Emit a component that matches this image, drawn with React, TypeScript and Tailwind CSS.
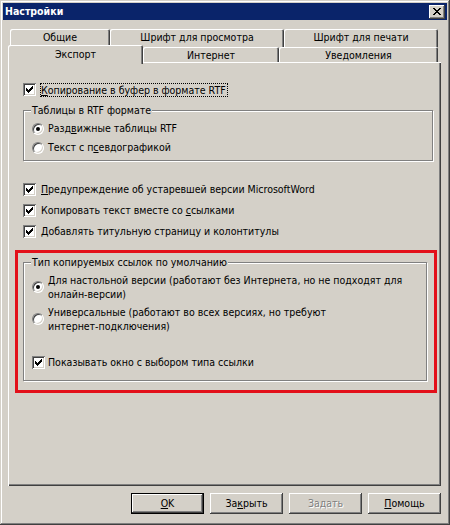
import React from "react";

const raised =
  "shadow-[inset_-1px_-1px_0_#404040,inset_1px_1px_0_#ffffff,inset_-2px_-2px_0_#808080,inset_2px_2px_0_#d4d0c8]";

const CheckMark = () => (
  <svg width="7" height="7" viewBox="0 0 7 7" shapeRendering="crispEdges">
    <rect x="0" y="2" width="1" height="3" fill="#000" />
    <rect x="1" y="3" width="1" height="3" fill="#000" />
    <rect x="2" y="4" width="1" height="3" fill="#000" />
    <rect x="3" y="3" width="1" height="3" fill="#000" />
    <rect x="4" y="2" width="1" height="3" fill="#000" />
    <rect x="5" y="1" width="1" height="3" fill="#000" />
    <rect x="6" y="0" width="1" height="3" fill="#000" />
  </svg>
);

const CheckBox = ({ checked }: { checked: boolean }) => (
  <div className="w-[13px] h-[13px] shrink-0 bg-white flex items-center justify-center shadow-[inset_1px_1px_0_#808080,inset_-1px_-1px_0_#ffffff,inset_2px_2px_0_#404040,inset_-2px_-2px_0_#d4d0c8]">
    {checked && <CheckMark />}
  </div>
);

const Radio = ({ checked }: { checked: boolean }) => (
  <div className="w-[12px] h-[12px] shrink-0 rounded-full bg-white border border-t-[#808080] border-l-[#808080] border-b-white border-r-white flex items-center justify-center shadow-[inset_1px_1px_0_#404040,inset_-1px_-1px_0_#d4d0c8]">
    {checked && <div className="w-[4px] h-[4px] rounded-full bg-black" />}
  </div>
);

const Tab = ({ label, w, h, selected }: { label: string; w: string; h: string; selected?: boolean }) => (
  <div
    className={`${w} ${h} flex justify-center bg-[#d4d0c8] rounded-t-[2px] shadow-[inset_1px_1px_0_#ffffff,inset_-1px_0_0_#404040,inset_-2px_0_0_#808080] ${
      selected ? "relative z-10 pt-[3px] -mb-[2px]" : "pt-[2px]"
    }`}
  >
    <span className="leading-[13px]">{label}</span>
  </div>
);

const Group = ({ legend, className, children }: { legend: string; className: string; children: React.ReactNode }) => (
  <fieldset
    className={`${className} border border-[#808080] pl-[8px] shadow-[1px_1px_0_#ffffff,inset_1px_1px_0_#ffffff]`}
  >
    <legend className="-ml-[1px] px-[1px] leading-[13px] bg-[#d4d0c8]">{legend}</legend>
    {children}
  </fieldset>
);

const Button = ({ children, def, disabled }: { children: React.ReactNode; def?: boolean; disabled?: boolean }) => (
  <div
    className={`w-[73px] h-[21px] flex items-center justify-center ${
      def
        ? "shadow-[inset_0_0_0_1px_#000000,inset_-2px_-2px_0_#404040,inset_2px_2px_0_#ffffff,inset_-3px_-3px_0_#808080]"
        : raised
    } ${disabled ? "text-[#808080] [text-shadow:1px_1px_0_#ffffff]" : ""}`}
  >
    {children}
  </div>
);

export default function App() {
  return (
    <div className="w-[450px] h-[525px] bg-[#d4d0c8] p-[3px] flex flex-col font-['DejaVu_Sans_Condensed','Liberation_Sans',Arial,sans-serif] text-[10.5px] leading-[13px] text-black shadow-[inset_-1px_-1px_0_#404040,inset_1px_1px_0_#d4d0c8,inset_-2px_-2px_0_#808080,inset_2px_2px_0_#ffffff]">
      {/* Title bar */}
      <div className="h-[17px] bg-[#0a246a] flex items-center justify-between pl-[2px] pr-[2px]">
        <span className="font-bold text-white">Настройки</span>
        <div className={`w-[16px] h-[14px] bg-[#d4d0c8] flex items-center justify-center ${raised}`}>
          <svg width="8" height="7" viewBox="0 0 8 7" shapeRendering="crispEdges">
            <path
              d="M0 0h2v1h-2zM6 0h2v1h-2zM1 1h2v1h-2zM5 1h2v1h-2zM2 2h4v1h-4zM3 3h2v1h-2zM2 4h4v1h-4zM1 5h2v1h-2zM5 5h2v1h-2zM0 6h2v1h-2zM6 6h2v1h-2z"
              fill="#000"
            />
          </svg>
        </div>
      </div>

      {/* Tabs */}
      <div className="pl-[5px] pt-[9px]">
        <div className="flex ml-[2px] h-[18px]">
          <Tab label="Общие" w="w-[100px]" h="h-[18px]" />
          <Tab label="Шрифт для просмотра" w="w-[174px]" h="h-[18px]" />
          <Tab label="Шрифт для печати" w="w-[154px]" h="h-[18px]" />
        </div>
        <div className="flex items-end h-[17px] -mt-[2px]">
          <Tab label="Экспорт" w="w-[135px]" h="h-[19px]" selected />
          <Tab label="Интернет" w="w-[136px]" h="h-[15px]" />
          <Tab label="Уведомления" w="w-[159px]" h="h-[15px]" />
        </div>

        {/* Panel */}
        <div className="w-[433px] h-[424px] pl-[15px] pt-[20px] flex flex-col items-start shadow-[inset_1px_1px_0_#ffffff,inset_-1px_-1px_0_#404040,inset_-2px_-2px_0_#808080]">
          <div className="h-[15px] flex items-center gap-[4px]">
            <CheckBox checked />
            <span className="border border-dotted border-black leading-[12px] pr-[1px]">
              <u>К</u>опирование в буфер в формате RTF
            </span>
          </div>

          <Group legend="Таблицы в RTF формате" className="mt-[7px] w-[410px] h-[57px] pt-[2px]">
            <div className="h-[19px] flex items-center gap-[4px]">
              <Radio checked />
              <span>
                Разд<u>в</u>ижные таблицы RTF
              </span>
            </div>
            <div className="h-[19px] flex items-center gap-[4px]">
              <Radio checked={false} />
              <span>
                Текст с п<u>с</u>евдографикой
              </span>
            </div>
          </Group>

          <div className="mt-[21px] flex flex-col gap-[6px]">
            <div className="h-[15px] flex items-center gap-[5px]">
              <CheckBox checked />
              <span>
                <u>П</u>редупреждение об устаревшей версии MicrosoftWord
              </span>
            </div>
            <div className="h-[15px] flex items-center gap-[5px]">
              <CheckBox checked />
              <span>
                Копировать текст вместе со <u>с</u>сылками
              </span>
            </div>
            <div className="h-[15px] flex items-center gap-[5px]">
              <CheckBox checked />
              <span>Добавлять титульную страницу и колонтитулы</span>
            </div>
          </div>

          {/* Highlighted group */}
          <div className="mt-[11px] -ml-[8px] w-[422px] border-[3px] border-[#e3101a] pt-[3px] pl-[5px] pb-[9px]">
            <Group legend="Тип копируемых ссылок по умолчанию" className="w-[404px] h-[125px]">
              <div className="mt-[4px] flex items-center gap-[4px]">
                <Radio checked />
                <span className="leading-[14px]">
                  Для настольной версии (работают без Интернета, но не подходят для
                  <br />
                  онлайн-версии)
                </span>
              </div>
              <div className="mt-[4px] flex items-center gap-[4px]">
                <Radio checked={false} />
                <span className="leading-[14px]">
                  Универсальные (работают во всех версиях, но требуют
                  <br />
                  интернет-подключения)
                </span>
              </div>
              <div className="mt-[22px] h-[15px] flex items-center gap-[3px]">
                <CheckBox checked />
                <span>Показывать окно с выбором типа ссылки</span>
              </div>
            </Group>
          </div>
        </div>

        {/* Buttons */}
        <div className="w-[433px] mt-[7px] flex justify-end gap-[6px]">
          <Button def>
            <span>
              <u>O</u>K
            </span>
          </Button>
          <Button>
            <span>
              За<u>к</u>рыть
            </span>
          </Button>
          <Button disabled>Задать</Button>
          <Button>
            <span>
              <u>П</u>омощь
            </span>
          </Button>
        </div>
      </div>
    </div>
  );
}
